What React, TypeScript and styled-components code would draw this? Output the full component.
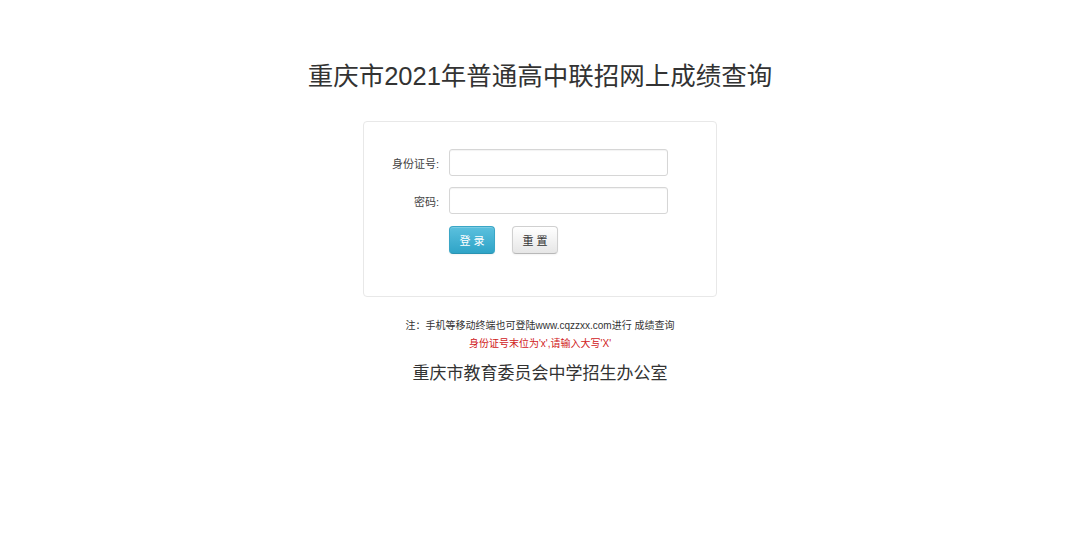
import styled, { createGlobalStyle } from 'styled-components'

const GlobalStyle = createGlobalStyle`
  body {
    margin: 0;
    background: #fff;
    font-family: 'Liberation Sans', 'Noto Sans CJK SC', sans-serif;
    color: #333;
  }
`

const Page = styled.div`
  display: flex;
  flex-direction: column;
  align-items: center;
  padding-top: 60px;
`

const Title = styled.h1`
  margin: 0;
  font-size: 25.5px;
  line-height: 32px;
  font-weight: normal;
  color: #333;
`

const Card = styled.div`
  margin-top: 29px;
  width: 354px;
  box-sizing: border-box;
  border: 1px solid #e8e8e8;
  border-radius: 4px;
  padding: 27px 0 42px 0;
  display: grid;
  grid-template-columns: 75px 219px;
  column-gap: 10px;
  row-gap: 11px;
  align-items: center;
`

const Label = styled.label`
  font-size: 11px;
  color: #444;
  text-align: right;
`

const Input = styled.input`
  width: 219px;
  height: 27px;
  box-sizing: border-box;
  border: 1px solid #d6d6d6;
  border-radius: 3px;
  box-shadow: inset 0 1px 1px rgba(0, 0, 0, 0.05);
  outline: none;
  padding: 4px 6px;
`

const Buttons = styled.div`
  grid-column: 2;
  display: flex;
  gap: 17px;
  margin-top: 1px;
`

const Button = styled.button<{ $primary?: boolean }>`
  width: 46px;
  height: 28px;
  border-radius: 4px;
  font-size: 11px;
  letter-spacing: 3px;
  padding: 0 0 0 3px;
  font-family: 'Liberation Sans', 'Noto Sans CJK SC', sans-serif;
  cursor: pointer;
  color: ${({ $primary }) => ($primary ? '#fff' : '#333')};
  border: 1px solid ${({ $primary }) => ($primary ? '#3aa6c6' : '#d0d0d0')};
  border-bottom-color: ${({ $primary }) => ($primary ? '#2a93b2' : '#b8b8b8')};
  background: ${({ $primary }) =>
    $primary
      ? 'linear-gradient(to bottom, #5bc0de, #2fa4c7)'
      : 'linear-gradient(to bottom, #ffffff, #e6e6e6)'};
  box-shadow: inset 0 1px 0 rgba(255, 255, 255, 0.2), 0 1px 2px rgba(0, 0, 0, 0.05);
`

const Note = styled.p`
  margin: 20px 0 0 0;
  font-size: 10px;
  line-height: 18px;
  color: #333;
`

const Warning = styled.p`
  margin: 0;
  font-size: 10px;
  line-height: 18px;
  color: #d0201a;
`

const Footer = styled.p`
  margin: 9px 0 0 0;
  font-size: 17px;
  line-height: 24px;
  color: #333;
`

export default function App() {
  return (
    <>
      <GlobalStyle />
      <Page>
        <Title>重庆市2021年普通高中联招网上成绩查询</Title>
        <Card>
          <Label>身份证号:</Label>
          <Input type="text" />
          <Label>密码:</Label>
          <Input type="password" />
          <Buttons>
            <Button $primary>登录</Button>
            <Button>重置</Button>
          </Buttons>
        </Card>
        <Note>注：手机等移动终端也可登陆www.cqzzxx.com进行 成绩查询</Note>
        <Warning>身份证号末位为'x',请输入大写'X'</Warning>
        <Footer>重庆市教育委员会中学招生办公室</Footer>
      </Page>
    </>
  )
}
